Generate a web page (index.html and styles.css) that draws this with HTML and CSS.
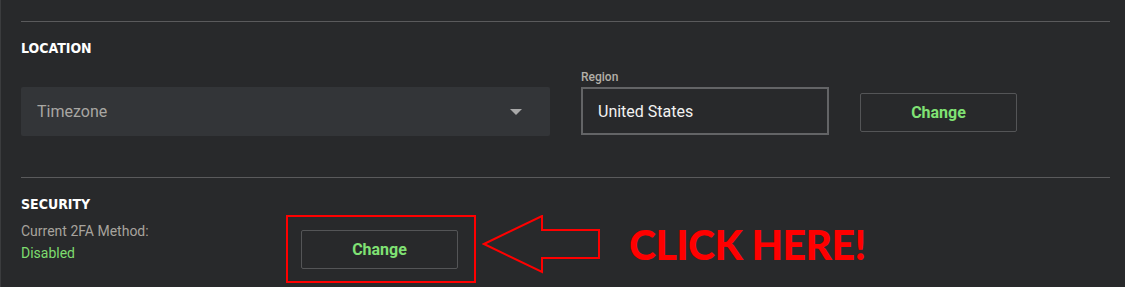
FILE: index.html
```html
<!DOCTYPE html>
<html>
<head>
<meta charset="utf-8">
<link rel="stylesheet" href="styles.css">
</head>
<body>
<div class="page">
  <section class="section">
    <h2 class="heading">LOCATION</h2>
    <div class="location-row">
      <div class="select">
        <span class="select-text">Timezone</span>
        <span class="caret"></span>
      </div>
      <div class="field">
        <label class="field-label">Region</label>
        <div class="input">United States</div>
      </div>
      <button class="btn btn-location">Change</button>
    </div>
  </section>
  <section class="section security">
    <h2 class="heading">SECURITY</h2>
    <div class="security-row">
      <div class="info">
        <div class="info-label">Current 2FA Method:</div>
        <div class="info-value">Disabled</div>
      </div>
      <div class="highlight">
        <button class="btn">Change</button>
      </div>
      <svg class="arrow" width="120" height="60" viewBox="0 0 120 60">
        <polygon points="2,29 60,1 60,15 117,15 117,43 60,43 60,57" fill="none" stroke="#ff0000" stroke-width="2"/>
      </svg>
      <div class="callout">CLICK HERE!</div>
    </div>
  </section>
</div>
</body>
</html>
```

FILE: styles.css
```css
html, body {
  margin: 0;
  padding: 0;
  background: #28292b;
}
.page {
  width: 1125px;
  height: 287px;
  box-sizing: border-box;
  border-left: 1px solid #3b3c3e;
  padding: 21px 15px 0 20px;
  font-family: Roboto, "Liberation Sans", sans-serif;
  overflow: hidden;
}
.section {
  border-top: 1px solid #5a5a5c;
  padding-top: 18px;
}
.heading {
  margin: 0;
  font-family: "DejaVu Sans Condensed", "DejaVu Sans", sans-serif;
  font-weight: bold;
  font-size: 14px;
  line-height: 16px;
  color: #ffffff;
  letter-spacing: 0;
}
.location-row {
  display: flex;
  align-items: flex-start;
  margin-top: 14px;
  padding-bottom: 41px;
}
.select {
  margin-top: 17px;
  width: 529px;
  height: 49px;
  background: #333538;
  border-radius: 2px;
  display: flex;
  align-items: center;
  justify-content: space-between;
  padding: 0 28px 0 16px;
  box-sizing: border-box;
}
.select-text {
  color: #a9a7a3;
  font-size: 16px;
}
.caret {
  width: 0;
  height: 0;
  border-left: 6px solid transparent;
  border-right: 6px solid transparent;
  border-top: 6px solid #a9a9a9;
}
.field {
  margin-left: 31px;
  display: flex;
  flex-direction: column;
}
.field-label {
  font-size: 12px;
  line-height: 14px;
  color: #b3afa8;
  font-weight: 500;
  margin-bottom: 3px;
}
.input {
  width: 248px;
  height: 48px;
  box-sizing: border-box;
  border: 2px solid #636466;
  display: flex;
  align-items: center;
  padding-left: 15px;
  color: #f2f2f2;
  font-size: 16px;
}
.btn {
  width: 157px;
  height: 39px;
  box-sizing: border-box;
  background: #28292b;
  border: 1px solid #545557;
  border-radius: 2px;
  color: #80e274;
  font-family: Roboto, "Liberation Sans", sans-serif;
  font-weight: bold;
  font-size: 16px;
  padding: 0;
}
.btn-location {
  margin-top: 23px;
  margin-left: 31px;
}
.security {
  padding-top: 18px;
}
.security-row {
  display: flex;
  align-items: flex-start;
  margin-top: 3px;
}
.info {
  width: 265px;
  margin-top: 8px;
  font-size: 14px;
}
.info-label {
  color: #a7a39d;
  line-height: 17px;
}
.info-value {
  color: #7edc6f;
  line-height: 17px;
  margin-top: 5px;
}
.highlight {
  border: 2px solid #ff0000;
  padding: 13px 16px 12px 13px;
}
.arrow {
  display: block;
  margin-left: 6px;
}
.callout {
  margin-left: 27px;
  margin-top: 0;
  color: #ff0000;
  font-family: Lato, "Open Sans", sans-serif;
  font-weight: 900;
  font-size: 41px;
  line-height: 60px;
  letter-spacing: -0.6px;
}
```
